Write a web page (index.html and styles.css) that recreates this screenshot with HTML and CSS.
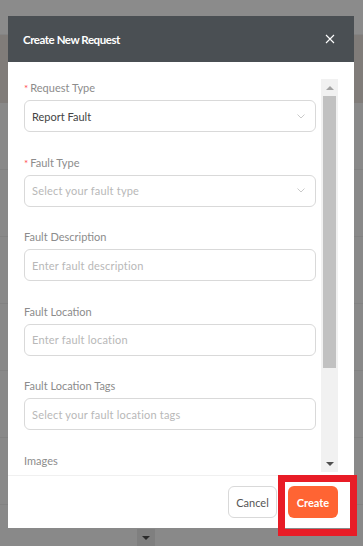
FILE: index.html
```html
<!DOCTYPE html>
<html>
<head>
<meta charset="utf-8">
<link rel="stylesheet" href="styles.css">
</head>
<body>
<div class="page">
  <div class="bg-top"></div>
  <div class="bg-band"></div>
  <div class="bg-rows">
    <div class="bg-row r1"></div>
    <div class="bg-row"></div>
    <div class="bg-row"></div>
    <div class="bg-row"></div>
    <div class="bg-row"></div>
    <div class="bg-row"></div>
  </div>
  <div class="bg-arrow"><span class="tri-down dark"></span></div>

  <div class="modal">
    <div class="modal-header">
      <span class="modal-title">Create New Request</span>
      <svg class="close" width="10" height="10" viewBox="0 0 10 10"><path d="M1 1L9 9M9 1L1 9" stroke="#fff" stroke-width="1.1" fill="none"/></svg>
    </div>
    <div class="modal-body">
      <div class="form">
        <div class="item">
          <div class="label"><span class="req">*</span>Request Type</div>
          <div class="input select"><span class="value">Report Fault</span><svg class="chev" width="8" height="5" viewBox="0 0 8 5"><path d="M0.5 0.5L4 4L7.5 0.5" stroke="#c4c4c4" stroke-width="0.9" fill="none"/></svg></div>
        </div>
        <div class="item">
          <div class="label"><span class="req">*</span>Fault Type</div>
          <div class="input select"><span class="ph">Select your fault type</span><svg class="chev" width="8" height="5" viewBox="0 0 8 5"><path d="M0.5 0.5L4 4L7.5 0.5" stroke="#c4c4c4" stroke-width="0.9" fill="none"/></svg></div>
        </div>
        <div class="item">
          <div class="label">Fault Description</div>
          <div class="input"><span class="ph">Enter fault description</span></div>
        </div>
        <div class="item">
          <div class="label">Fault Location</div>
          <div class="input"><span class="ph">Enter fault location</span></div>
        </div>
        <div class="item">
          <div class="label">Fault Location Tags</div>
          <div class="input"><span class="ph">Select your fault location tags</span></div>
        </div>
        <div class="item">
          <div class="label">Images</div>
        </div>
      </div>
      <div class="scrollbar">
        <div class="sb-btn"><span class="tri-up"></span></div>
        <div class="sb-track"><div class="sb-thumb"></div></div>
        <div class="sb-btn"><span class="tri-down"></span></div>
      </div>
    </div>
    <div class="modal-footer">
      <button class="btn cancel">Cancel</button>
      <button class="btn create">Create</button>
    </div>
  </div>
  <div class="highlight"></div>
</div>
</body>
</html>
```
FILE: styles.css
```css
* { box-sizing: border-box; }
html, body { margin: 0; padding: 0; }
body {
  width: 363px;
  height: 546px;
  overflow: hidden;
  background: #898989;
  font-family: Lato, "Noto Sans", sans-serif;
}
.page { position: relative; width: 363px; height: 546px; }
.bg-top { height: 35px; background: #8b8b8b; border-bottom: 1px solid #848484; }
.bg-band { height: 68px; background: #807c79; }
.bg-rows { display: flex; flex-direction: column; }
.bg-row { height: 67px; border-bottom: 1px solid #828282; }
.bg-row.r1 { height: 67px; }
.bg-arrow {
  position: absolute; left: 137px; top: 529px; width: 18px; height: 17px;
  background: #7f7f7f; display: flex; align-items: center; justify-content: center;
}
.tri-down { width: 0; height: 0; border-left: 4px solid transparent; border-right: 4px solid transparent; border-top: 4px solid #555; }
.tri-down.dark { border-top-color: #2a2a2a; }
.tri-up { width: 0; height: 0; border-left: 4px solid transparent; border-right: 4px solid transparent; border-bottom: 4px solid #a3a3a3; }

.modal {
  position: absolute; left: 8px; top: 16px; width: 346px; height: 512px;
  background: #fff; display: flex; flex-direction: column;
}
.modal-header {
  height: 46px; background: #4a4f53; display: flex; align-items: center;
  justify-content: space-between; padding: 0 19px 0 15px;
}
.modal-title { color: #fff; font-size: 11.5px; font-weight: 700; letter-spacing: -0.45px; }
.modal-body { height: 413px; display: flex; overflow: hidden; padding-left: 16px; }
.form { width: 292px; padding-top: 80px; margin-top: -62px; flex: none; }
.item { margin-bottom: 22.5px; }
.label { height: 16px; line-height: 16px; font-size: 11px; color: #8c8c8c; margin-bottom: 4px; }
.req { color: #ff4d4f; margin-right: 2px; font-size: 10px; }
.input {
  height: 32px; border: 1px solid #d9d9d9; border-radius: 6px; display: flex;
  align-items: center; justify-content: space-between; padding: 0 10px 0 7px;
  font-size: 11px;
}
.value { color: #444; }
.ph { color: #b8b8b8; letter-spacing: 0.2px; }
.chev { display: block; }
.scrollbar {
  width: 17px; margin: 17px 0 3px 5px; background: #f1f1f1; display: flex; flex-direction: column;
}
.sb-btn { height: 17px; display: flex; align-items: center; justify-content: center; }
.sb-track { flex: 1; display: flex; flex-direction: column; }
.sb-thumb { height: 272px; margin: 0 2px; background: #c1c1c1; }
.sb-btn:last-child .tri-down { border-top-color: #505050; }

.modal-footer {
  flex: 1; border-top: 1px solid #f0f0f0; display: flex; align-items: center;
  justify-content: flex-end; gap: 11px; padding: 0 16px 0 0;
}
.btn {
  height: 32px; border-radius: 6px; font-family: Lato, sans-serif; font-size: 11px;
  padding: 0; cursor: pointer;
}
.cancel { width: 49px; background: #fff; border: 1px solid #d9d9d9; color: #555; }
.create { width: 50px; background: #ff6433; border: none; color: #fff; font-weight: 700; }
.highlight {
  position: absolute; left: 278px; top: 475px; width: 79px; height: 61px;
  border: 7px solid #e81c26;
}
```
